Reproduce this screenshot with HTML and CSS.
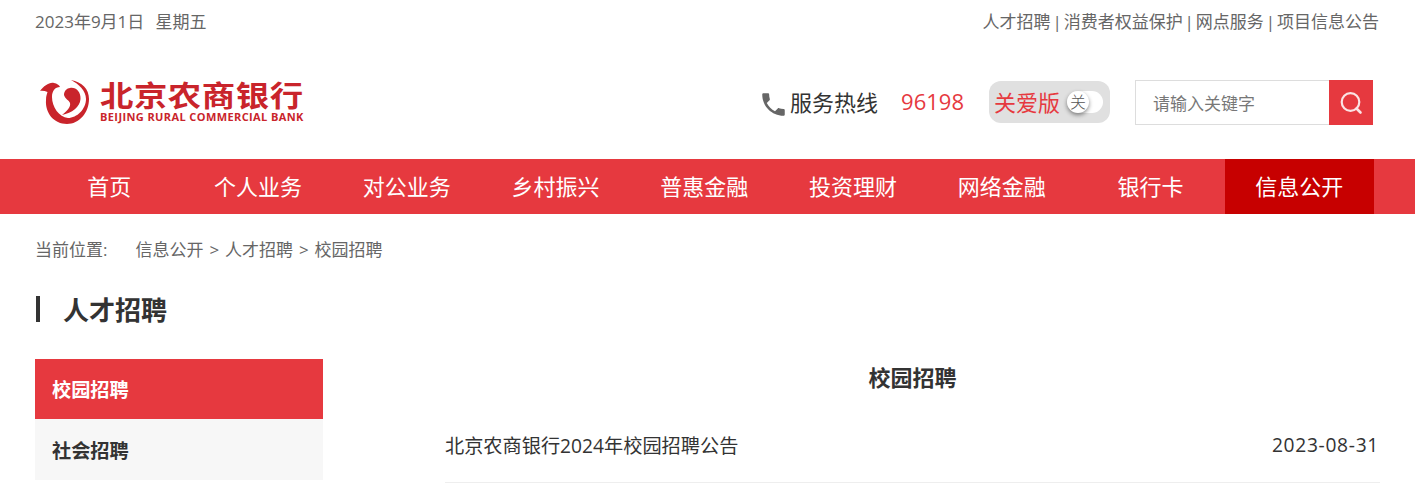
FILE: index.html
```html
<!DOCTYPE html>
<html lang="zh-CN">
<head>
    <meta charset="UTF-8">
    <meta name="viewport" content="width=device-width, initial-scale=1.0">
    <title>校园招聘 - 北京农商银行</title>
    <link rel="stylesheet" href="styles.css">
</head>
<body>

<div class="topbar wrap">
    <span class="date">2023年9月1日&nbsp;&nbsp;&nbsp;星期五</span>
    <div class="toplinks">
        <a href="#">人才招聘</a> | <a href="#">消费者权益保护</a> | <a href="#">网点服务</a> | <a href="#">项目信息公告</a>
    </div>
</div>

<div class="header wrap">
    <a class="logo" href="#">
        <svg class="logo-mark" viewBox="0 0 52 46" width="52" height="46">
            <path d="M1 11 C5 6 10 2 15 3 C18 3.500 20 5 21 7 C16 7 13 11 13 17 C13 27 20 37 29 38 C38 38 47 29 47 19 C47 11 40 4 32 0 C43 2 50 9 50 19 C50 33 40 44 28 44 C15 44 6 33 7 20 C7 16 8 14 8.500 12 C6 11 3 10.500 1 11 Z" fill="#c9242b"/>
            <path d="M31 8 C37 7 42 12 41.500 19 C41 27 33 33 23 35 C28 31 32 27 31 23 C30 20 26 19 25 15 C25 11 28 8 31 8 Z" fill="#c9242b"/>
        </svg>
        <span class="logo-text">
            <span class="logo-cn">北京农商银行</span>
            <span class="logo-en">BEIJING RURAL COMMERCIAL BANK</span>
        </span>
    </a>
    <div class="tools">
        <svg class="phone" viewBox="2 2 20 20" width="25" height="25">
            <path d="M6.620 10.790c1.440 2.830 3.760 5.140 6.590 6.590l2.200-2.200c.270-.270.670-.360 1.020-.240 1.120.370 2.330.570 3.570.570.550 0 1 .450 1 1V20c0 .550-.450 1-1 1-9.390 0-17-7.610-17-17 0-.550.450-1 1-1h3.500c.550 0 1 .450 1 1 0 1.250.200 2.450.570 3.570.110.350.030.740-.250 1.020l-2.200 2.200z" fill="#666"/>
        </svg>
        <span class="hotline">服务热线</span>
        <span class="hotline-num">96198</span>
        <div class="care">
            <span class="care-label">关爱版</span>
            <span class="care-switch"><span class="care-knob">关</span></span>
        </div>
        <form class="search">
            <input class="search-input" type="text" placeholder="请输入关键字">
            <button class="search-btn" type="button" aria-label="搜索">
                <svg viewBox="0 0 24 24" width="24" height="24">
                    <circle cx="11.500" cy="11" r="8.800" fill="none" stroke="#fbe3e4" stroke-width="2.200"/>
                    <path d="M17.500 17.500 L21.500 21.500" stroke="#fbe3e4" stroke-width="2.600" stroke-linecap="round"/>
                </svg>
            </button>
        </form>
    </div>
</div>

<div class="nav">
    <div class="nav-inner">
        <a class="nav-item" href="#">首页</a>
        <a class="nav-item" href="#">个人业务</a>
        <a class="nav-item" href="#">对公业务</a>
        <a class="nav-item" href="#">乡村振兴</a>
        <a class="nav-item" href="#">普惠金融</a>
        <a class="nav-item" href="#">投资理财</a>
        <a class="nav-item" href="#">网络金融</a>
        <a class="nav-item" href="#">银行卡</a>
        <a class="nav-item active" href="#">信息公开</a>
    </div>
</div>

<div class="crumbs wrap">
    <span class="crumbs-label">当前位置:</span>
    <span class="crumbs-path">信息公开 &gt; 人才招聘 &gt; 校园招聘</span>
</div>

<h2 class="section-title wrap"><span class="section-bar"></span>人才招聘</h2>

<div class="main wrap">
    <div class="side">
        <a class="side-item active" href="#">校园招聘</a>
        <a class="side-item" href="#">社会招聘</a>
    </div>
    <div class="content">
        <h3 class="content-title">校园招聘</h3>
        <div class="news-row">
            <a href="#">北京农商银行2024年校园招聘公告</a>
            <span class="news-date">2023-08-31</span>
        </div>
    </div>
</div>

</body>
</html>
```

FILE: styles.css
```css
* {
    box-sizing: border-box;
}
body {
    margin: 0;
    font-family: "Open Sans", "Noto Sans CJK SC", sans-serif;
    color: #333;
    background-color: #fff;
    overflow: hidden;
}
a {
    color: inherit;
    text-decoration: none;
}
.wrap {
    margin-left: 35px;
    width: 1345px;
}
.topbar {
    display: flex;
    justify-content: space-between;
    align-items: center;
    height: 41px;
    margin-bottom: 2px;
    font-size: 17px;
    color: #666;
}
.date {
    word-spacing: -0.700px;
}
.toplinks {
    word-spacing: -2.500px;
    margin-right: 1px;
}
.header {
    display: flex;
    justify-content: space-between;
    align-items: center;
    height: 116px;
}
.logo {
    display: flex;
    align-items: center;
    gap: 9px;
    margin-left: 4px;
}
.logo-mark {
    display: block;
    margin-top: 4px;
}
.logo-text {
    display: flex;
    flex-direction: column;
    color: #c9242b;
    font-family: "Noto Sans CJK SC", sans-serif;
    font-weight: 700;
}
.logo-cn {
    font-size: 29px;
    line-height: 29px;
    letter-spacing: 0.500px;
    white-space: nowrap;
    transform: scaleX(1.150);
    transform-origin: left center;
}
.logo-en {
    font-family: "Open Sans", sans-serif;
    font-size: 11px;
    line-height: 12px;
    margin-top: 2px;
    letter-spacing: 0.400px;
    white-space: nowrap;
}
.tools {
    display: flex;
    align-items: center;
    margin-right: 7px;
}
.phone {
    margin-top: 6px;
    margin-right: 4px;
}
.hotline {
    font-size: 22px;
}
.hotline-num {
    font-size: 22px;
    color: #e6393f;
    margin-left: 23px;
}
.care {
    display: flex;
    align-items: center;
    width: 121px;
    height: 42px;
    margin-left: 25px;
    margin-top: 2px;
    padding-left: 5px;
    background-color: #e0e0e0;
    border-radius: 12px;
}
.care-label {
    font-size: 22px;
    color: #e6393f;
    white-space: nowrap;
    margin-top: -2px;
}
.care-switch {
    display: block;
    width: 36px;
    height: 22px;
    margin-left: 7px;
    background-color: #fff;
    border-radius: 11px;
}
.care-knob {
    display: block;
    width: 22px;
    height: 22px;
    line-height: 22px;
    text-align: center;
    font-size: 16px;
    font-weight: 300;
    color: #555;
    background-color: #fff;
    border-radius: 50%;
    box-shadow: 0 2px 4px rgba(0, 0, 0, 0.45);
}
.search {
    display: flex;
    margin-left: 25px;
    margin-top: 3px;
}
.search-input {
    width: 194px;
    height: 45px;
    padding: 2px 17px 0;
    border: 1px solid #ddd;
    border-right: none;
    font-family: inherit;
    font-size: 17px;
    outline: none;
}
.search-input::placeholder {
    color: #777;
}
.search-btn {
    display: flex;
    align-items: center;
    justify-content: center;
    width: 44px;
    height: 45px;
    padding: 0;
    border: none;
    background-color: #e6393f;
}
.nav {
    height: 55px;
    background-color: #e6393f;
}
.nav-inner {
    display: flex;
    margin-left: 35px;
}
.nav-item {
    width: 148.750px;
    height: 55px;
    line-height: 55px;
    text-align: center;
    font-size: 22px;
    color: #fff;
}
.nav-item.active {
    background-color: #c70000;
}
.crumbs {
    display: flex;
    gap: 28px;
    height: 68px;
    align-items: center;
    font-size: 17px;
    color: #666;
}
.crumbs-path {
    word-spacing: 1.500px;
}
.section-title {
    display: flex;
    align-items: center;
    height: 26px;
    margin-top: 14px;
    margin-bottom: 0;
    font-size: 26px;
    font-weight: 700;
    color: #333;
}
.section-bar {
    width: 4px;
    height: 26px;
    margin-left: 1px;
    margin-right: 23px;
    background-color: #333;
}
.main {
    display: flex;
    margin-top: 37px;
}
.side {
    width: 288px;
    flex-shrink: 0;
}
.side-item {
    display: block;
    height: 61px;
    line-height: 64px;
    padding-left: 17px;
    font-size: 19.200px;
    font-weight: 700;
    background-color: #f7f7f7;
}
.side-item.active {
    height: 60px;
    line-height: 62px;
    background-color: #e6393f;
    color: #fff;
}
.content {
    flex: 1;
    margin-left: 122px;
}
.content-title {
    margin: 0;
    height: 36px;
    line-height: 36px;
    text-align: center;
    font-size: 22px;
    font-weight: 700;
}
.news-row {
    display: flex;
    justify-content: space-between;
    align-items: center;
    height: 88px;
    padding-top: 12px;
    font-size: 19.200px;
    border-bottom: 1px solid #eee;
}
.news-date {
    letter-spacing: 0.700px;
    margin-right: 1px;
}
```
